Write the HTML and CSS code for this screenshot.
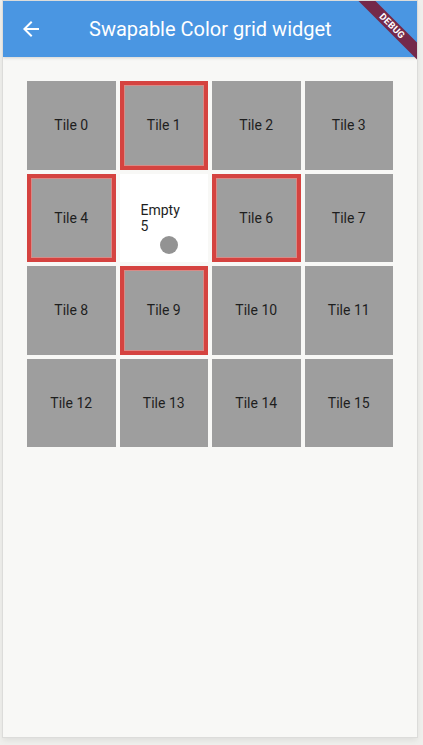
FILE: index.html
```html
<!DOCTYPE html>
<html>
<head>
<meta charset="utf-8">
<link rel="stylesheet" href="styles.css">
</head>
<body>
<div class="app">
  <header class="appbar">
    <svg class="back" width="24" height="24" viewBox="0 0 24 24"><path d="M20 11H7.83l5.59-5.59L12 4l-8 8 8 8 1.41-1.41L7.83 13H20v-2z" fill="#fff"/></svg>
    <h1 class="title">Swapable Color grid widget</h1>
  </header>
  <div class="banner-wrap"><div class="banner">DEBUG</div></div>
  <main class="content">
    <div class="grid">
      <div class="tile">Tile 0</div>
      <div class="tile sel">Tile 1</div>
      <div class="tile">Tile 2</div>
      <div class="tile">Tile 3</div>
      <div class="tile sel">Tile 4</div>
      <div class="empty">
        <div class="empty-text">Empty<br>5</div>
        <div class="dot"></div>
      </div>
      <div class="tile sel">Tile 6</div>
      <div class="tile">Tile 7</div>
      <div class="tile">Tile 8</div>
      <div class="tile sel">Tile 9</div>
      <div class="tile">Tile 10</div>
      <div class="tile">Tile 11</div>
      <div class="tile">Tile 12</div>
      <div class="tile">Tile 13</div>
      <div class="tile">Tile 14</div>
      <div class="tile">Tile 15</div>
    </div>
  </main>
</div>
</body>
</html>
```
FILE: styles.css
```css
html, body {
  margin: 0;
  padding: 0;
}
body {
  background: #efefec;
  font-family: Roboto, "Noto Sans", sans-serif;
  width: 423px;
  height: 745px;
  overflow: hidden;
}
.app {
  position: relative;
  margin: 1px 0 0 3px;
  width: 414px;
  height: 736px;
  background: #f8f8f6;
  box-shadow: 0 0 0 1px #dcdcda, 0 3px 6px rgba(0,0,0,0.08);
  overflow: hidden;
  display: flex;
  flex-direction: column;
}
.appbar {
  height: 56px;
  flex: none;
  background: #4a96e2;
  display: flex;
  align-items: center;
  box-shadow: 0 1px 3px rgba(0,0,0,0.15);
  position: relative;
  z-index: 1;
}
.back {
  margin-left: 16px;
  flex: none;
}
.title {
  margin: 0 0 0 46px;
  color: #fff;
  font-size: 20px;
  font-weight: 400;
  letter-spacing: 0;
}
.banner-wrap {
  position: absolute;
  top: 0;
  right: 0;
  width: 80px;
  height: 80px;
  overflow: hidden;
  z-index: 2;
}
.banner {
  position: absolute;
  top: 19px;
  right: -25px;
  width: 100px;
  height: 12px;
  line-height: 12px;
  background: #74294a;
  color: #fff;
  font-size: 9.5px;
  font-weight: 700;
  text-align: center;
  transform: rotate(45deg);
  letter-spacing: 0.2px;
}
.content {
  flex: 1;
  padding: 24px 0 0 24px;
}
.grid {
  width: 366px;
  display: grid;
  grid-template-columns: repeat(4, 1fr);
  grid-auto-rows: 88.5px;
  gap: 4px;
}
.tile {
  background: #9e9e9e;
  display: flex;
  align-items: center;
  justify-content: center;
  font-size: 14px;
  color: #1e1e1e;
  box-sizing: border-box;
}
.tile.sel {
  border: 4px solid #d54340;
  box-shadow: inset 0 0 0 1px #d88a86;
}
.empty {
  background: #fff;
  box-sizing: border-box;
  padding: 28px 0 0 21px;
  display: flex;
  flex-direction: column;
  align-items: flex-start;
}
.empty-text {
  font-size: 14px;
  line-height: 16.5px;
  color: #1e1e1e;
}
.dot {
  width: 18px;
  height: 18px;
  border-radius: 50%;
  background: #939393;
  margin: 1px 0 0 19px;
}
```
